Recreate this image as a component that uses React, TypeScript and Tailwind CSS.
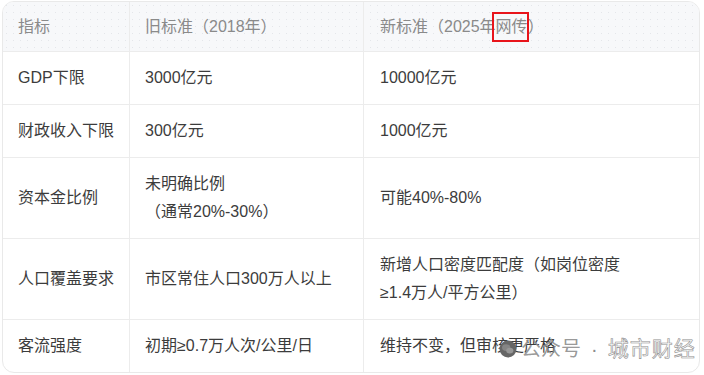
import React from "react";

const font = {
  fontFamily: '"Liberation Sans", "Noto Sans CJK SC", sans-serif',
};

type Row = { a: React.ReactNode; b: React.ReactNode; c: React.ReactNode };

const rows: Row[] = [
  { a: "GDP下限", b: "3000亿元", c: "10000亿元" },
  { a: "财政收入下限", b: "300亿元", c: "1000亿元" },
  {
    a: "资本金比例",
    b: (
      <>
        未明确比例
        <br />
        （通常20%-30%）
      </>
    ),
    c: "可能40%-80%",
  },
  {
    a: "人口覆盖要求",
    b: "市区常住人口300万人以上",
    c: (
      <>
        新增人口密度匹配度（如岗位密度
        <br />
        ≥1.4万人/平方公里）
      </>
    ),
  },
  { a: "客流强度", b: "初期≥0.7万人次/公里/日", c: "维持不变，但审核更严格" },
];

function WeChatIcon() {
  return (
    <svg width="18" height="18" viewBox="0 0 18 18">
      <circle cx="9" cy="9" r="8.5" fill="#666666" />
      <ellipse cx="7.2" cy="7.6" rx="4.2" ry="3.4" fill="#858585" />
      <ellipse cx="10.8" cy="10.6" rx="3.6" ry="2.9" fill="#979797" />
    </svg>
  );
}

export default function App() {
  return (
    <div className="w-[704px] h-[375px] bg-white" style={font}>
      <div className="relative ml-[2px] mt-[1px] w-[698px] overflow-hidden rounded-[12px] border border-[#e9e9e9] text-[16px] leading-[28px]">
        <div className="grid grid-cols-[127px_234px_1fr] border-b border-[#ececec] bg-[#f7f8fa] bg-[radial-gradient(circle,#e4e6ea_0.6px,transparent_1px)] bg-[length:7px_7px] text-[#8a8a8a]">
          <div className="border-r border-[#ececec] py-[11px] pl-[15px] h-[49px]">指标</div>
          <div className="border-r border-[#ececec] py-[11px] pl-[15px] h-[49px]">旧标准（2018年）</div>
          <div className="py-[11px] pl-[16px] h-[49px]">
            新标准（2025年
            <span className="relative">
              网传
              <span className="absolute left-[-4px] right-[-1px] top-[-6px] bottom-[-7px] border-2 border-[#e8141b]" />
            </span>
            ）
          </div>
        </div>
        {rows.map((r, i) => (
          <div
            key={i}
            className={
              "grid grid-cols-[127px_234px_1fr] text-[#3c3c3c] " +
              (i < rows.length - 1 ? "border-b border-[#ececec]" : "")
            }
          >
            <div className="flex items-center border-r border-[#ececec] py-3 pl-[15px]">{r.a}</div>
            <div className="flex items-center border-r border-[#ececec] py-3 pl-[15px]">
              <div>{r.b}</div>
            </div>
            <div className="flex items-center py-3 pl-[16px]">
              <div>{r.c}</div>
            </div>
          </div>
        ))}
        <div className="absolute left-[496px] top-[333px] flex items-center gap-[4px]">
          <WeChatIcon />
          <span className="text-[20px] leading-[28px] text-[#8c8c8c]/90">公众号</span>
          <span className="mx-[6px] text-[20px] leading-[28px] text-[#8c8c8c]">·</span>
          <span className="text-[21px] leading-[28px] text-[#fbfbfb] [-webkit-text-stroke:0.6px_#8f8f8f] tracking-[1px]">
            城市财经
          </span>
        </div>
      </div>
    </div>
  );
}
